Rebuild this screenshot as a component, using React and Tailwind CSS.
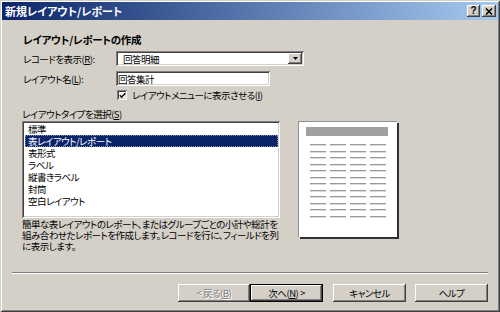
export default function App() {
  const raised =
    "shadow-[inset_-1px_-1px_0_#404040,inset_1px_1px_0_#ffffff,inset_-2px_-2px_0_#808080,inset_2px_2px_0_#d4d0c8]";
  const sunken =
    "shadow-[inset_1px_1px_0_#808080,inset_-1px_-1px_0_#ffffff,inset_2px_2px_0_#404040,inset_-2px_-2px_0_#d4d0c8]";
  const items = ["標準", "表レイアウト/レポート", "表形式", "ラベル", "縦書きラベル", "封筒", "空白レイアウト"];
  const rows = Array.from({ length: 12 });
  const cols = Array.from({ length: 4 });

  return (
    <div className="w-[500px] h-[312px] bg-[#d4d0c8] flex flex-col p-[2px] text-black text-[9.5px] leading-[12px] tracking-[-0.5px] font-['Noto_Sans_CJK_JP',sans-serif] [font-feature-settings:'palt'] shadow-[inset_1px_1px_0_#d4d0c8,inset_-1px_-1px_0_#404040,inset_2px_2px_0_#ffffff,inset_-2px_-2px_0_#808080]">
      {/* Title bar */}
      <div className="h-[18px] flex items-center pl-[3px] pr-[2px] bg-linear-to-r/srgb from-[#0a246a] to-[#a6caf0]">
        <div className="text-white font-bold text-[11px] tracking-normal whitespace-nowrap">新規レイアウト/レポート</div>
        <div className="ml-auto flex items-center">
          <div className={`w-[13px] h-[12px] bg-[#d4d0c8] flex items-center justify-center ${raised}`}>
            <span className="font-['Liberation_Sans',sans-serif] font-bold text-[10px] leading-[10px] tracking-normal">?</span>
          </div>
          <div className={`ml-[2px] w-[14px] h-[12px] bg-[#d4d0c8] flex items-center justify-center ${raised}`}>
            <svg width="8" height="7" viewBox="0 0 8 7">
              <path d="M1 0.5 L7 6.5 M7 0.5 L1 6.5" stroke="#000" strokeWidth="1.6" />
            </svg>
          </div>
        </div>
      </div>

      {/* Content */}
      <div className="flex flex-col pl-[20px]">
        <div className="mt-[14px] h-[12px] font-bold text-[10.5px] tracking-[-0.3px] pl-[1px] whitespace-nowrap">
          レイアウト/レポートの作成
        </div>

        <div className="mt-[5px] h-[15px] flex items-center">
          <div className="w-[94px] pl-[1px] whitespace-nowrap">
            レコードを表示(<span className="underline">R</span>):
          </div>
          <div className={`w-[188px] h-[15px] bg-white flex items-center pl-[7px] pr-[2px] ${sunken}`}>
            <span className="whitespace-nowrap">回答明細</span>
            <div className={`ml-auto w-[14px] h-[11px] bg-[#d4d0c8] flex items-center justify-center ${raised}`}>
              <svg width="5" height="3" viewBox="0 0 5 3">
                <path d="M0 0 H5 L2.5 3 Z" fill="#000" />
              </svg>
            </div>
          </div>
        </div>

        <div className="mt-[5px] h-[15px] flex items-center">
          <div className="w-[94px] pl-[1px] whitespace-nowrap">
            レイアウト名(<span className="underline">L</span>):
          </div>
          <div className={`w-[154px] h-[15px] bg-white flex items-center pl-[2px] ${sunken}`}>
            <span className="whitespace-nowrap">回答集計</span>
          </div>
        </div>

        <div className="mt-[3px] h-[12px] flex items-center ml-[95px]">
          <div className={`w-[10px] h-[10px] bg-white flex items-center justify-center ${sunken}`}>
            <svg width="7" height="7" viewBox="0 0 7 7">
              <polyline points="0.8,3.2 2.6,5.2 6.2,1.2" fill="none" stroke="#000" strokeWidth="1.5" />
            </svg>
          </div>
          <div className="ml-[5px] whitespace-nowrap">
            レイアウトメニューに表示させる(<span className="underline">I</span>)
          </div>
        </div>

        <div className="mt-[7px] h-[12px] whitespace-nowrap">
          レイアウトタイプを選択(<span className="underline">S</span>)
        </div>

        <div className="mt-[1px] flex items-start">
          <div className="w-[258px] flex flex-col">
            <div className={`h-[97px] bg-white p-[2px] flex flex-col ${sunken}`}>
              {items.map((it, i) => (
                <div
                  key={it}
                  className={
                    i === 1
                      ? "ml-[1px] h-[12px] leading-[12px] pl-[3px] bg-[#0a246a] text-white whitespace-nowrap outline-1 outline-dotted outline-[#8090b0] -outline-offset-1"
                      : "ml-[1px] h-[12px] leading-[12px] pl-[3px] whitespace-nowrap"
                  }
                >
                  {it}
                </div>
              ))}
            </div>
            <div className="mt-[1px] leading-[11px] whitespace-nowrap">
              簡単な表レイアウトのレポート、またはグループごとの小計や総計を
              <br />
              組み合わせたレポートを作成します。レコードを行に、フィールドを列
              <br />
              に表示します。
            </div>
          </div>

          <div className="ml-[18px] w-[99px] h-[116px] bg-white border-t border-l border-[#909090] shadow-[2px_2px_0_#303030] flex flex-col">
            <div className="mt-[5px] ml-[7px] w-[82px] h-[9px] bg-[#a0a0a0]" />
            <div className="mt-[8px] ml-[11px] flex flex-col gap-[4.5px]">
              {rows.map((_, r) => (
                <div key={r} className="flex gap-[4px]">
                  {cols.map((_, c) => (
                    <div key={c} className="w-[16px] h-[2px] border-t border-[#999999] bg-[#dcdcdc]" />
                  ))}
                </div>
              ))}
            </div>
          </div>
        </div>
      </div>

      {/* Footer */}
      <div className="mt-auto">
        <div className="mx-[10px] h-[2px] border-t border-[#808080] bg-white" />
        <div className="mt-[10px] mb-[8px] flex justify-end pr-[10px]">
          <div className={`w-[72px] h-[18px] flex items-center justify-center text-[#808080] [text-shadow:1px_1px_0_#ffffff] whitespace-nowrap ${raised}`}>
            &lt; 戻る(<span className="underline">B</span>)
          </div>
          <div className="w-[73px] h-[18px] border border-black">
            <div className={`w-full h-full flex items-center justify-center whitespace-nowrap ${raised}`}>
              次へ(<span className="underline">N</span>) &gt;
            </div>
          </div>
          <div className={`ml-[10px] w-[73px] h-[18px] flex items-center justify-center whitespace-nowrap ${raised}`}>
            キャンセル
          </div>
          <div className={`ml-[9px] w-[73px] h-[18px] flex items-center justify-center whitespace-nowrap ${raised}`}>
            ヘルプ
          </div>
        </div>
      </div>
    </div>
  );
}
